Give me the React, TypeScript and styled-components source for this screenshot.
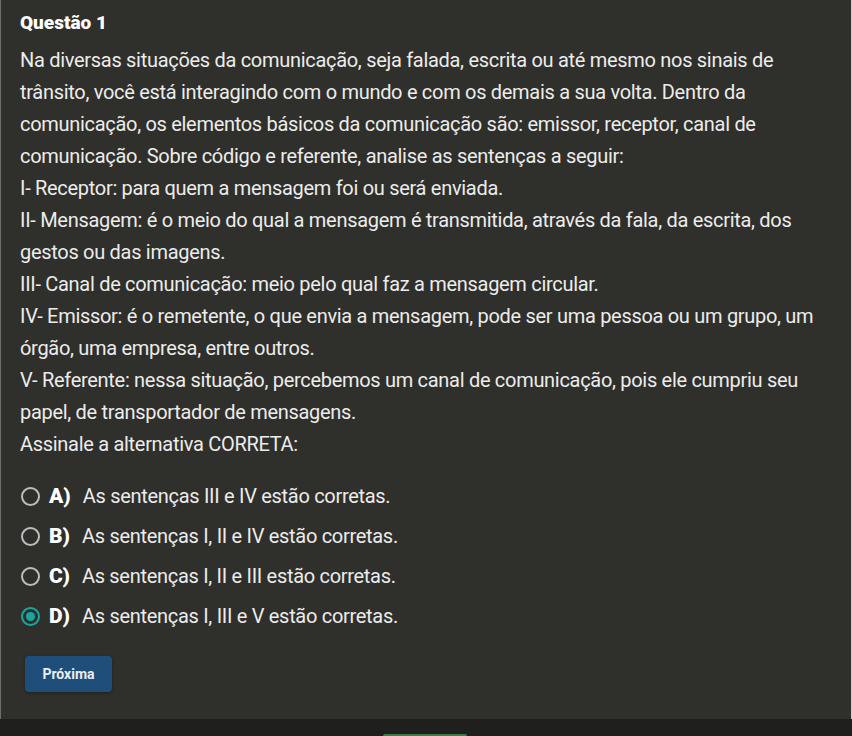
import React, { useState } from "react";
import styled, { createGlobalStyle } from "styled-components";

const GlobalStyle = createGlobalStyle`
  html, body { margin: 0; padding: 0; background: #1f1f1e; }
  * { box-sizing: border-box; }
`;

const textFont = `Roboto, "Liberation Sans", sans-serif`;

const Page = styled.div`
  width: 852px;
  height: 736px;
  overflow: hidden;
  display: flex;
  flex-direction: column;
  background: #1f1f1e;
`;

const Panel = styled.section`
  height: 719px;
  flex: none;
  background: #2f2f2b;
  border-left: 1px solid #6e6e6b;
  border-right: 1px solid #cfcfcf;
  padding: 12px 20px 26px 19px;
  display: flex;
  flex-direction: column;
`;

const Title = styled.h2`
  margin: 0;
  font-family: ${textFont};
  font-weight: 900;
  font-size: 19px;
  line-height: 22px;
  color: #ffffff;
`;

const Statement = styled.div`
  margin-top: 10px;
  font-family: ${textFont};
  font-size: 20px;
  letter-spacing: -0.3px;
  line-height: 32px;
  color: #ececec;
`;

const Para = styled.p`
  margin: 0;
`;

const Line = styled.span`
  display: block;
  white-space: nowrap;
`;

const Options = styled.div`
  margin-top: 16px;
  display: flex;
  flex-direction: column;
`;

const Option = styled.label`
  height: 40px;
  display: flex;
  align-items: center;
  cursor: pointer;
  font-family: ${textFont};
  font-size: 20px;
  letter-spacing: -0.3px;
  color: #ececec;
`;

const Radio = styled.span<{ $checked: boolean }>`
  width: 19px;
  height: 19px;
  border-radius: 50%;
  border: 2px solid ${(p) => (p.$checked ? "#1aa5a1" : "#bdbdbd")};
  display: flex;
  align-items: center;
  justify-content: center;
  flex: none;
  margin-left: 1px;
  &::after {
    content: "";
    width: 9px;
    height: 9px;
    border-radius: 50%;
    background: #1aa5a1;
    display: ${(p) => (p.$checked ? "block" : "none")};
  }
`;

const Letter = styled.span`
  font-weight: 900;
  font-size: 21px;
  letter-spacing: 0;
  margin-left: 9px;
  margin-right: 12px;
  color: #ffffff;
`;

const NextButton = styled.button`
  margin-top: 20px;
  align-self: flex-start;
  margin-left: 5px;
  width: 87px;
  height: 36px;
  border: none;
  border-radius: 4px;
  background: #1f4e7a;
  color: #e8eef4;
  font-family: Roboto, "Liberation Sans", sans-serif;
  font-weight: 700;
  font-size: 14px;
  box-shadow: 0 1px 3px rgba(0, 0, 0, 0.35);
  cursor: pointer;
`;

const Footer = styled.footer`
  flex: 1;
  display: flex;
  justify-content: center;
  padding-top: 15px;
  overflow: hidden;
`;

const FooterTab = styled.div`
  width: 84px;
  height: 20px;
  background: #3d7a45;
  border-radius: 2px 2px 0 0;
  margin-left: -2px;
`;

const statement: string[][] = [
  [
    "Na diversas situações da comunicação, seja falada, escrita ou até mesmo nos sinais de",
    "trânsito, você está interagindo com o mundo e com os demais a sua volta. Dentro da",
    "comunicação, os elementos básicos da comunicação são: emissor, receptor, canal de",
    "comunicação. Sobre código e referente, analise as sentenças a seguir:",
  ],
  ["I- Receptor: para quem a mensagem foi ou será enviada."],
  [
    "II- Mensagem: é o meio do qual a mensagem é transmitida, através da fala, da escrita, dos",
    "gestos ou das imagens.",
  ],
  ["III- Canal de comunicação: meio pelo qual faz a mensagem circular."],
  [
    "IV- Emissor: é o remetente, o que envia a mensagem, pode ser uma pessoa ou um grupo, um",
    "órgão, uma empresa, entre outros.",
  ],
  [
    "V- Referente: nessa situação, percebemos um canal de comunicação, pois ele cumpriu seu",
    "papel, de transportador de mensagens.",
  ],
  ["Assinale a alternativa CORRETA:"],
];

const options = [
  { key: "A", text: "As sentenças III e IV estão corretas." },
  { key: "B", text: "As sentenças I, II e IV estão corretas." },
  { key: "C", text: "As sentenças I, II e III estão corretas." },
  { key: "D", text: "As sentenças I, III e V estão corretas." },
];

export default function App() {
  const [selected, setSelected] = useState("D");
  return (
    <Page>
      <GlobalStyle />
      <Panel>
        <Title>Questão 1</Title>
        <Statement>
          {statement.map((lines, i) => (
            <Para key={i}>
              {lines.map((l, j) => (
                <Line key={j}>{l}</Line>
              ))}
            </Para>
          ))}
        </Statement>
        <Options>
          {options.map((o) => (
            <Option key={o.key} onClick={() => setSelected(o.key)}>
              <Radio $checked={selected === o.key} />
              <Letter>{o.key})</Letter>
              {o.text}
            </Option>
          ))}
        </Options>
        <NextButton>Próxima</NextButton>
      </Panel>
      <Footer>
        <FooterTab />
      </Footer>
    </Page>
  );
}
